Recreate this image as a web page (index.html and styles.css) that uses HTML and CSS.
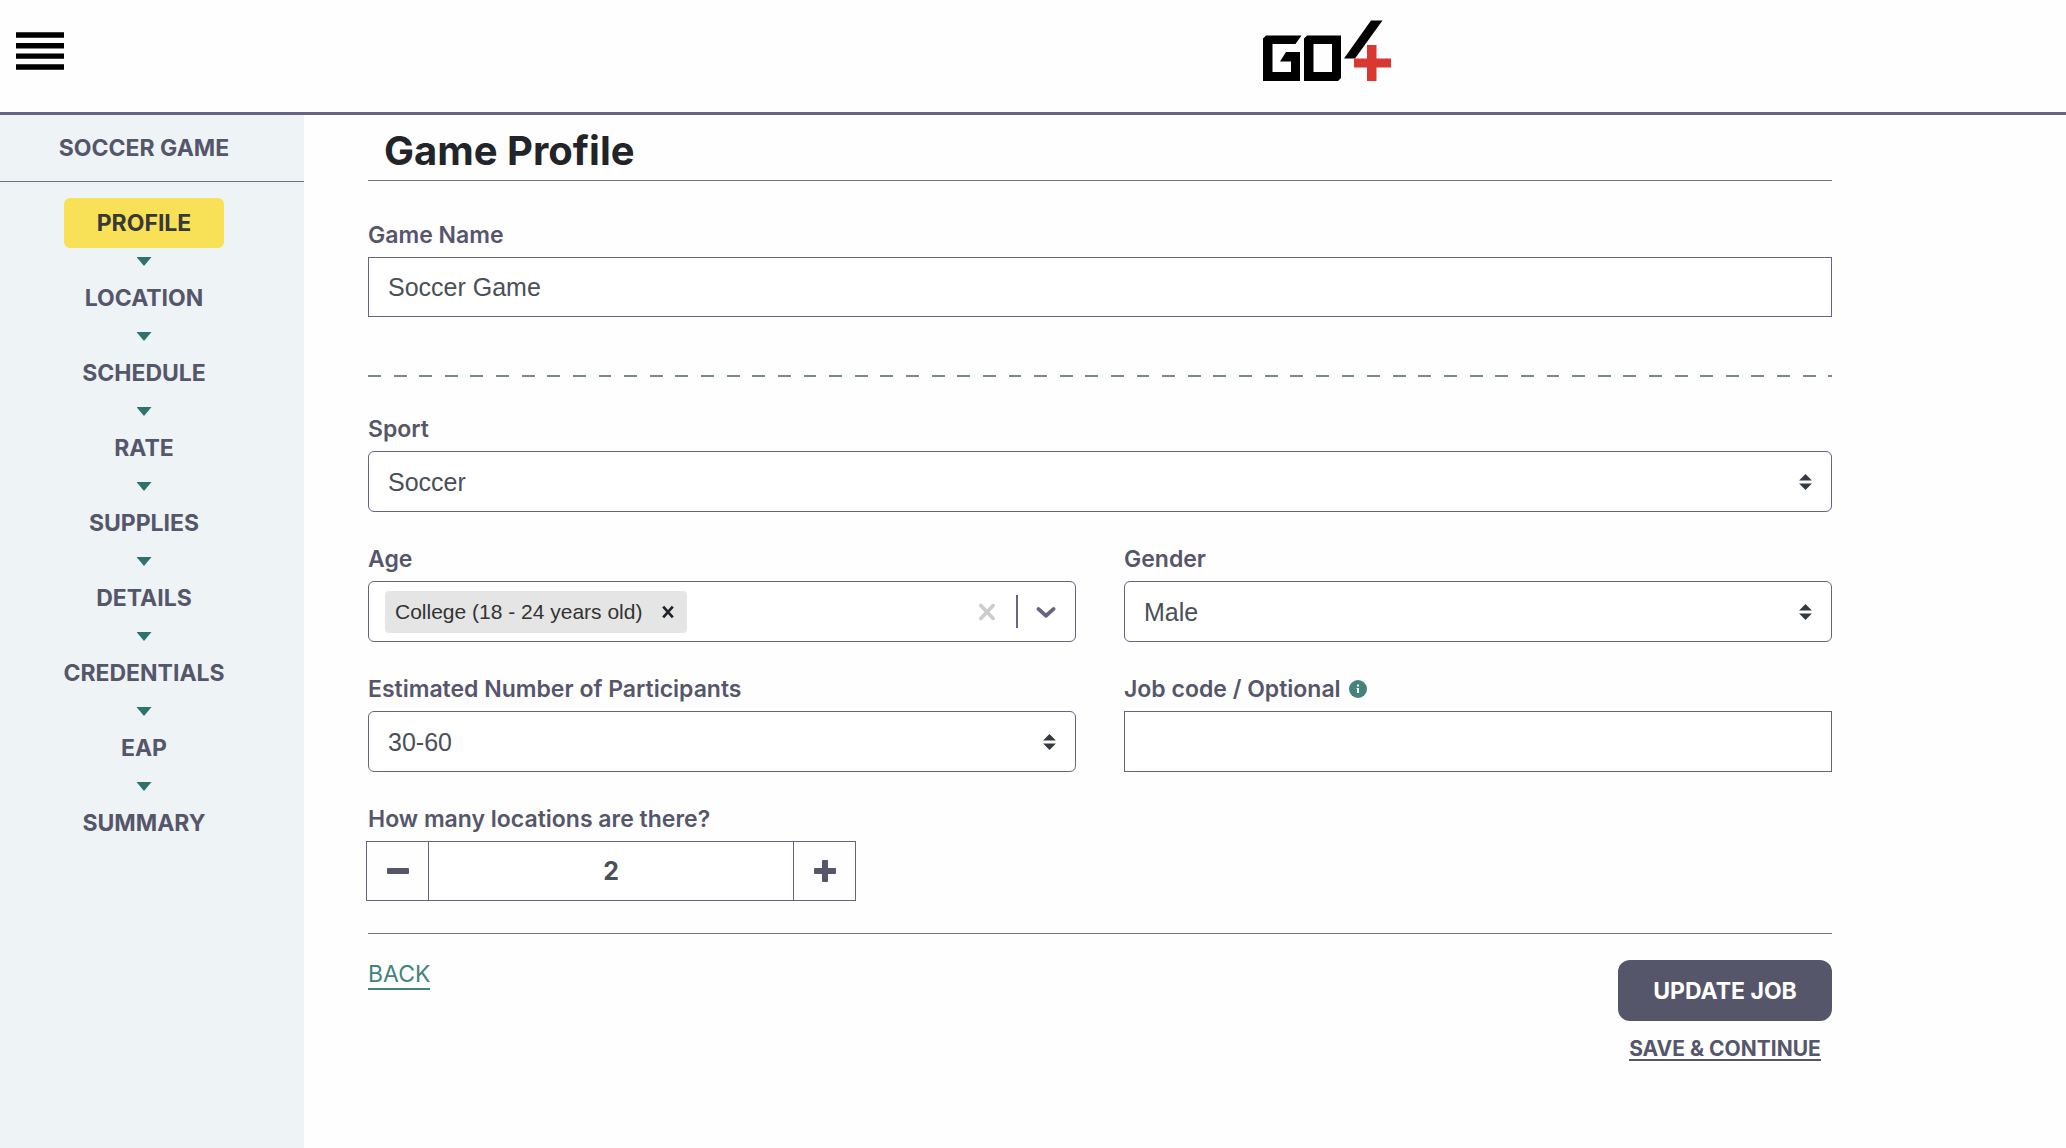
FILE: index.html
```html
<!DOCTYPE html>
<html lang="en">
<head>
<meta charset="utf-8">
<meta name="viewport" content="width=device-width, initial-scale=1">
<title>Game Profile</title>
<link rel="stylesheet" href="styles.css">
</head>
<body>
<header class="topbar">
  <button class="menu-button" type="button" aria-label="Menu">
    <svg width="48" height="38" viewBox="0 0 48 38" aria-hidden="true"><path d="M0 .3h48v5.4H0zM0 11h48v5.4H0zM0 21.4h48v5.4H0zM0 32.3h48v5.4H0z"/></svg>
  </button>
  <a class="logo" href="#" aria-label="GO4">
    <svg width="130" height="62" viewBox="0 0 130 62" aria-hidden="true">
      <path fill-rule="evenodd" d="M4 15.500h35.500l-6 8.500H10.500v28H29V41.500H18l6-9.500h14v29H1V18.500zM45 15.500h34v42.500l-3 3H42V18.500zM51.500 24v28H70V24z"/>
      <path d="M109 .5h11.500L93 38.500H82z"/>
      <path fill="#d93831" d="M105 25h9.500v13.500H129v9h-14.500V61H105V47.500H92v-9h13z"/>
    </svg>
  </a>
</header>
<div class="layout">
  <aside class="sidebar">
    <h2 class="sidebar-title">SOCCER GAME</h2>
    <nav aria-label="Steps">
      <ol class="steps">
        <li><a class="step active" href="#" aria-current="step">PROFILE</a></li>
        <li><a class="step" href="#">LOCATION</a></li>
        <li><a class="step" href="#">SCHEDULE</a></li>
        <li><a class="step" href="#">RATE</a></li>
        <li><a class="step" href="#">SUPPLIES</a></li>
        <li><a class="step" href="#">DETAILS</a></li>
        <li><a class="step" href="#">CREDENTIALS</a></li>
        <li><a class="step" href="#">EAP</a></li>
        <li><a class="step" href="#">SUMMARY</a></li>
      </ol>
    </nav>
  </aside>
  <main class="content">
    <form class="form">
      <h1 class="page-title">Game Profile</h1>
      <div class="field">
        <label for="name">Game Name</label>
        <input class="control" id="name" type="text" value="Soccer Game">
      </div>
      <hr class="dashes">
      <div class="fields">
        <div class="field wide">
          <label for="sport">Sport</label>
          <select class="control select" id="sport"><option>Soccer</option></select>
        </div>
        <div class="field">
          <label for="age">Age</label>
          <div class="control multi">
            <span class="chip">College (18 - 24 years old)
              <button class="icon-button" type="button" aria-label="Remove College"><svg width="24" height="24" viewBox="0 0 20 20" aria-hidden="true"><path d="M6 5.500l8 9M14 5.500l-8 9" stroke="#212529" stroke-width="2.200"/></svg></button>
            </span>
            <input class="multi-input" id="age" type="text">
            <button class="icon-button" type="button" aria-label="Clear"><svg width="34" height="34" viewBox="0 0 20 20" aria-hidden="true"><path d="M6.400 6.200l7.200 7.600M13.600 6.200l-7.200 7.600" stroke="#ccc" stroke-width="2.200" stroke-linecap="round"/></svg></button>
            <span class="separator"></span>
            <button class="icon-button" type="button" aria-label="Open"><svg width="34" height="34" viewBox="0 0 20 20" aria-hidden="true"><path d="M5.500 8.200l4.500 4 4.500-4" fill="none" stroke="#66647f" stroke-width="2.200" stroke-linecap="round" stroke-linejoin="round"/></svg></button>
          </div>
        </div>
        <div class="field">
          <label for="gender">Gender</label>
          <select class="control select" id="gender"><option>Male</option></select>
        </div>
        <div class="field">
          <label for="participants">Estimated Number of Participants</label>
          <select class="control select" id="participants"><option>30-60</option></select>
        </div>
        <div class="field">
          <label for="code">Job code / Optional
            <svg class="info" width="18" height="18" viewBox="0 0 18 18" aria-hidden="true"><circle cx="9" cy="9" r="9" fill="#45827b"/><path fill="#fff" d="M8 4.500h2v2H8zM7.500 8H10v5H8V9h-.500z"/></svg>
          </label>
          <input class="control" id="code" type="text">
        </div>
        <div class="field wide">
          <label for="locations">How many locations are there?</label>
          <div class="stepper">
            <button class="stepper-button" type="button" aria-label="Decrease"><svg width="24" height="24" viewBox="0 0 24 24" aria-hidden="true"><rect x="1" y="9" width="22" height="6" rx="1"/></svg></button>
            <input class="stepper-value" id="locations" type="text" inputmode="numeric" value="2">
            <button class="stepper-button" type="button" aria-label="Increase"><svg width="24" height="24" viewBox="0 0 24 24" aria-hidden="true"><path d="M9 2q0-1 1-1h4q1 0 1 1v7h7q1 0 1 1v4q0 1-1 1h-7v7q0 1-1 1h-4q-1 0-1-1v-7H2q-1 0-1-1v-4q0-1 1-1h7z"/></svg></button>
          </div>
        </div>
      </div>
      <div class="actions">
        <a class="back" href="#">BACK</a>
        <div class="submit-group">
          <button class="primary" type="submit">UPDATE JOB</button>
          <a class="continue" href="#">SAVE &amp; CONTINUE</a>
        </div>
      </div>
    </form>
  </main>
</div>
</body>
</html>
```
FILE: styles.css
```css
* { box-sizing: border-box; }

body {
  margin: 0;
  min-height: 100vh;
  display: flex;
  flex-direction: column;
  background: #fefefe;
  color: #56566b;
  font-family: Inter, "Liberation Sans", sans-serif;
  font-size: 23px;
  line-height: 32px;
}

button { padding: 0; border: 0; background: none; font: inherit; color: inherit; }
svg { display: block; }

.topbar {
  display: grid;
  grid-template-columns: 61.1% auto;
  min-height: 115px;
  border-bottom: 3px solid #66647f;
}
.menu-button { justify-self: start; align-self: start; margin: 32px 16px; }
.logo { justify-self: start; align-self: start; margin-top: 20px; }

.layout { display: flex; flex: 1; }
.sidebar { flex: 0 0 304px; background: #eef3f6; }
.sidebar-title {
  margin: 0;
  padding: 17px 16px 17px 0;
  border-bottom: 1px solid #6c757d;
  font-size: 23px;
  font-weight: 700;
  text-align: center;
}

.steps { margin: 0; padding: 16px 16px 0 0; list-style: none; }
.steps li { display: flex; flex-direction: column; align-items: center; }
.steps li:not(:last-child)::after {
  content: "";
  width: 15px;
  height: 9px;
  margin: 9px 0 7px;
  background: #2f716c;
  clip-path: polygon(0 0, 100% 0, 50% 100%);
}
.step {
  min-width: 160px;
  padding: 9px 0;
  border-radius: 6px;
  color: inherit;
  font-weight: 700;
  text-align: center;
  text-decoration: none;
}
.step.active { background: #f9e157; color: #383838; }

.content { flex: 1; min-width: 0; padding: 0 64px; }
.form { max-width: 1464px; }
.page-title {
  margin: 0 0 38px;
  padding: 12px 16px 5px;
  border-bottom: 1px solid #6c757d;
  color: #212529;
  font-size: 40px;
  line-height: 48px;
  font-weight: 700;
}

.field { display: flex; flex-direction: column; gap: 6px; min-width: 0; }
.field label { display: flex; align-items: center; gap: 8px; font-weight: 600; }
.fields { display: grid; grid-template-columns: 1fr 1fr; gap: 31px 48px; }
.wide { grid-column: 1 / -1; }

.control {
  width: 100%;
  height: 60px;
  padding: 0 19px;
  border: 1px solid #66647f;
  border-radius: 0;
  background: #fff;
  color: #495057;
  font-family: "Liberation Sans", sans-serif;
  font-size: 25px;
}
.fields .control { height: 61px; }
.select {
  appearance: none;
  border-radius: 6px;
  background: #fff url("data:image/svg+xml,%3Csvg xmlns='http://www.w3.org/2000/svg' viewBox='0 0 4 5'%3E%3Cpath fill='%23343a40' d='M2 0L0 2h4zm0 5L0 3h4z'/%3E%3C/svg%3E") right 19px center / 13px 16px no-repeat;
}

.dashes {
  height: 2px;
  margin: 58px 0 36px;
  border: 0;
  background: repeating-linear-gradient(90deg, #7b888c 0 0.88%, transparent 0.88% 1.75%);
}

.control.multi { display: flex; align-items: center; padding: 0 12px 0 16px; border-radius: 6px; }
.chip {
  display: flex;
  align-items: center;
  gap: 14px;
  height: 42px;
  padding: 0 7px 0 10px;
  border-radius: 4px;
  background: #e5e5e5;
  color: #333;
  font-size: 21px;
  white-space: nowrap;
}
.multi-input { flex: 1; min-width: 0; border: 0; background: none; font: inherit; outline: 0; }
.separator { width: 2px; height: 33px; margin: 0 11px 0 12px; background: #66647f; }

.stepper {
  display: grid;
  grid-template-columns: 61px 1fr 61px;
  width: 490px;
  height: 60px;
  margin-left: -2px;
  border: 1px solid #66647f;
}
.stepper-button { display: grid; place-items: center; fill: #56566b; }
.stepper-value {
  min-width: 0;
  border: solid #66647f;
  border-width: 0 1px;
  background: #fff;
  color: #495057;
  font: 700 25px Inter, sans-serif;
  text-align: center;
}

.actions {
  display: flex;
  justify-content: space-between;
  align-items: flex-start;
  margin-top: 32px;
  padding: 26px 0 40px;
  border-top: 1px solid #6c757d;
}
.back {
  border-bottom: 2px solid #45827b;
  color: #45827b;
  line-height: 28px;
  text-decoration: none;
}
.submit-group { display: flex; flex-direction: column; align-items: center; gap: 18px; }
.primary {
  min-width: 214px;
  height: 61px;
  border-radius: 12px;
  background: #56566b;
  color: #fff;
  font-weight: 700;
}
.continue {
  border-bottom: 2px solid #56566b;
  color: inherit;
  font-size: 21px;
  line-height: 20px;
  font-weight: 700;
  text-decoration: none;
}
```
